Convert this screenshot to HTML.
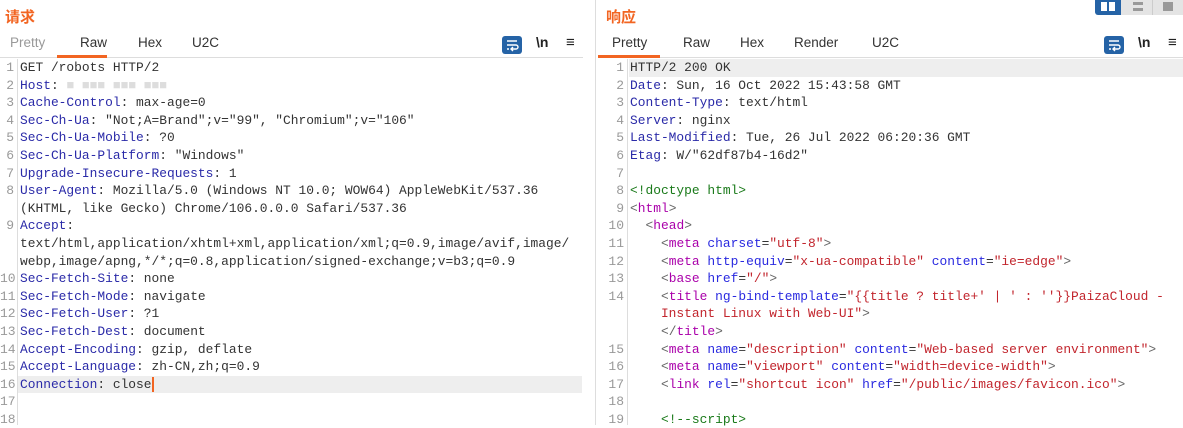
<!DOCTYPE html>
<html><head><meta charset="utf-8"><style>
*{margin:0;padding:0;box-sizing:border-box}
body{width:1183px;height:425px;background:#fff;overflow:hidden;position:relative;font-family:"Liberation Sans","Noto Sans CJK SC",sans-serif}
.title{position:absolute;top:6px;font-size:15px;font-weight:bold;color:#f26522;font-family:"Noto Sans CJK SC",sans-serif}
.tabs{position:absolute;top:30px;height:28px;border-bottom:1px solid #ddd;font-size:13.5px;color:#333}
.tab{position:absolute;top:5px}
.ul{position:absolute;top:25px;height:3px;background:#f26522}
.code{position:absolute;top:59px;font-family:"Liberation Mono",monospace;font-size:12.9px;line-height:17.6px;color:#333;white-space:pre}
.ln{position:absolute;top:59px;font-family:"Liberation Mono",monospace;font-size:13px;line-height:17.6px;color:#999;text-align:right;white-space:pre}
.k{color:#2a2aa8}.t{color:#a0a}.a{color:#2a2ae0}.v{color:#c2252d}.g{color:#666}.d{color:#1a7a1a}
.hl{position:absolute;height:17.6px;background:#eee}
.wrap{position:absolute;top:36px;width:20px;height:18px;background:#2563a6;border-radius:3px}
.icn{position:absolute;top:34px;font-size:14px;font-weight:bold;color:#222}
</style></head><body>
<div class="title" style="left:5px">请求</div>
<div class="title" style="left:606px">响应</div>
<div style="position:absolute;left:1095px;top:0;width:26px;height:15px;background:#2563a6;border-radius:0 0 0 3px"></div>
<div style="position:absolute;left:1101px;top:2px;width:6px;height:9px;background:#fff"></div>
<div style="position:absolute;left:1109px;top:2px;width:6px;height:9px;background:#fff"></div>
<div style="position:absolute;left:1121px;top:0;width:62px;height:15px;background:#e4e4e4"></div>
<div style="position:absolute;left:1133px;top:2px;width:10px;height:9px;border-top:3px solid #999;border-bottom:3px solid #999"></div>
<div style="position:absolute;left:1152px;top:0;width:1px;height:15px;background:#ccc"></div>
<div style="position:absolute;left:1163px;top:2px;width:10px;height:9px;background:#999"></div>

<div class="tabs" style="left:0;width:583px">
<span class="tab" style="left:10px;color:#999">Pretty</span>
<span class="tab" style="left:80px">Raw</span>
<span class="tab" style="left:138px">Hex</span>
<span class="tab" style="left:192px">U2C</span>
<div class="ul" style="left:57px;width:50px"></div>
</div>
<div class="wrap" style="left:502px"><svg width="20" height="18"><path d="M5 5h10M5 9h9a2 2 0 0 1 0 4h-4M11 11l-2 2 2 2M5 13h2" stroke="#fff" stroke-width="1.4" fill="none"/></svg></div>
<div class="icn" style="left:536px">\n</div>
<div class="icn" style="left:566px;font-size:15px">≡</div>

<div style="position:absolute;left:595px;top:0;width:1px;height:425px;background:#ddd"></div>

<div class="tabs" style="left:598px;width:585px">
<span class="tab" style="left:14px">Pretty</span>
<span class="tab" style="left:85px">Raw</span>
<span class="tab" style="left:142px">Hex</span>
<span class="tab" style="left:196px">Render</span>
<span class="tab" style="left:274px">U2C</span>
<div class="ul" style="left:0;width:62px"></div>
</div>
<div class="wrap" style="left:1104px"><svg width="20" height="18"><path d="M5 5h10M5 9h9a2 2 0 0 1 0 4h-4M11 11l-2 2 2 2M5 13h2" stroke="#fff" stroke-width="1.4" fill="none"/></svg></div>
<div class="icn" style="left:1138px">\n</div>
<div class="icn" style="left:1168px;font-size:15px">≡</div>

<div class="hl" style="left:18px;top:375.8px;width:564px"></div>
<div style="position:absolute;left:17px;top:59px;width:1px;height:366px;background:#ddd"></div>
<div class="ln" style="left:0;width:14px">1
2
3
4
5
6
7
8

9


10
11
12
13
14
15
16
17
18</div>
<div class="code" style="left:20px">GET /robots HTTP/2
<span class="k">Host</span>: <span style="color:#ddd">■ ■■■ ■■■ ■■■</span>
<span class="k">Cache-Control</span>: max-age=0
<span class="k">Sec-Ch-Ua</span>: "Not;A=Brand";v="99", "Chromium";v="106"
<span class="k">Sec-Ch-Ua-Mobile</span>: ?0
<span class="k">Sec-Ch-Ua-Platform</span>: "Windows"
<span class="k">Upgrade-Insecure-Requests</span>: 1
<span class="k">User-Agent</span>: Mozilla/5.0 (Windows NT 10.0; WOW64) AppleWebKit/537.36
(KHTML, like Gecko) Chrome/106.0.0.0 Safari/537.36
<span class="k">Accept</span>:
text/html,application/xhtml+xml,application/xml;q=0.9,image/avif,image/
webp,image/apng,*/*;q=0.8,application/signed-exchange;v=b3;q=0.9
<span class="k">Sec-Fetch-Site</span>: none
<span class="k">Sec-Fetch-Mode</span>: navigate
<span class="k">Sec-Fetch-User</span>: ?1
<span class="k">Sec-Fetch-Dest</span>: document
<span class="k">Accept-Encoding</span>: gzip, deflate
<span class="k">Accept-Language</span>: zh-CN,zh;q=0.9
<span class="k">Connection</span>: close<span style="border-left:2px solid #f26522"></span></div>

<div class="hl" style="left:629px;top:59px;width:554px"></div>
<div style="position:absolute;left:627px;top:59px;width:1px;height:366px;background:#ddd"></div>
<div class="ln" style="left:600px;width:24px">1
2
3
4
5
6
7
8
9
10
11
12
13
14


15
16
17
18
19</div>
<div class="code" style="left:630px">HTTP/2 200 OK
<span class="k">Date</span>: Sun, 16 Oct 2022 15:43:58 GMT
<span class="k">Content-Type</span>: text/html
<span class="k">Server</span>: nginx
<span class="k">Last-Modified</span>: Tue, 26 Jul 2022 06:20:36 GMT
<span class="k">Etag</span>: W/"62df87b4-16d2"

<span class="d">&lt;!doctype html&gt;</span>
<span class="g">&lt;</span><span class="t">html</span><span class="g">&gt;</span>
  <span class="g">&lt;</span><span class="t">head</span><span class="g">&gt;</span>
    <span class="g">&lt;</span><span class="t">meta</span> <span class="a">charset</span>=<span class="v">"utf-8"</span><span class="g">&gt;</span>
    <span class="g">&lt;</span><span class="t">meta</span> <span class="a">http-equiv</span>=<span class="v">"x-ua-compatible"</span> <span class="a">content</span>=<span class="v">"ie=edge"</span><span class="g">&gt;</span>
    <span class="g">&lt;</span><span class="t">base</span> <span class="a">href</span>=<span class="v">"/"</span><span class="g">&gt;</span>
    <span class="g">&lt;</span><span class="t">title</span> <span class="a">ng-bind-template</span>=<span class="v">"{{title ? title+' | ' : ''}}PaizaCloud -</span>
<span class="v">    Instant Linux with Web-UI"</span><span class="g">&gt;</span>
    <span class="g">&lt;/</span><span class="t">title</span><span class="g">&gt;</span>
    <span class="g">&lt;</span><span class="t">meta</span> <span class="a">name</span>=<span class="v">"description"</span> <span class="a">content</span>=<span class="v">"Web-based server environment"</span><span class="g">&gt;</span>
    <span class="g">&lt;</span><span class="t">meta</span> <span class="a">name</span>=<span class="v">"viewport"</span> <span class="a">content</span>=<span class="v">"width=device-width"</span><span class="g">&gt;</span>
    <span class="g">&lt;</span><span class="t">link</span> <span class="a">rel</span>=<span class="v">"shortcut icon"</span> <span class="a">href</span>=<span class="v">"/public/images/favicon.ico"</span><span class="g">&gt;</span>

    <span class="d">&lt;!--script&gt;</span></div>
</body></html>
